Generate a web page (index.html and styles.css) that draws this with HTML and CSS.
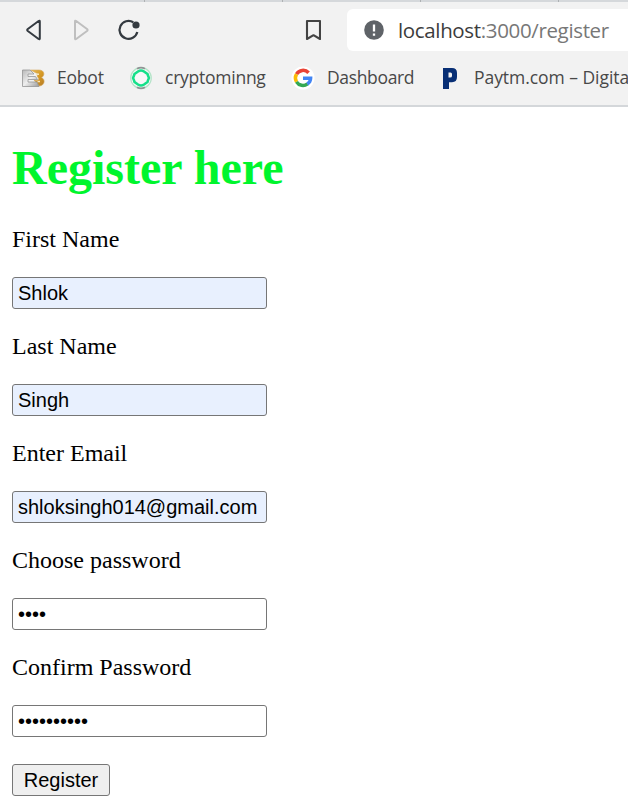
FILE: index.html
```html
<!DOCTYPE html>
<html lang="en">
<head>
<meta charset="utf-8">
<title>Register</title>
<link rel="stylesheet" href="styles.css">
</head>
<body>
<header class="browser">
  <div class="tabs"><i></i><i></i><i></i><i></i><i></i></div>
  <div class="toolbar">
    <svg class="nav" width="120" height="24" viewBox="0 0 120 24" fill="none" stroke-width="2" stroke-linejoin="round">
      <path d="M13.800 3.500v17q0 1.300-1.200.5L1.800 13q-1.200-1 0-2L12.600 3q1.200-.8 1.200.5z" stroke="#343a40"/>
      <path d="M49 3.500v17q0 1.300 1.200.5L61 13q1.200-1 0-2L50.200 3q-1.200-.8-1.200.5z" stroke="#bfbfbf"/>
      <path d="M107.300 4.200A9 9 0 1 0 111.300 14" stroke="#343a40" stroke-width="2.200"/>
      <circle cx="110" cy="7" r="3.600" fill="#343a40"/>
    </svg>
    <svg class="save" width="16" height="22" viewBox="0 0 16 22" fill="none" stroke="#434343" stroke-width="2.100"><path d="M2 2h13v18L8.500 16.200 2 20z" stroke-linejoin="round"/></svg>
    <div class="address">
      <svg width="20" height="20" viewBox="0 0 20 20"><circle cx="10" cy="10" r="9.800" fill="#5f6368"/><path d="M10 4.500v7M10 13.500v2.300" stroke="#fff" stroke-width="2.300"/></svg>
      <span class="url">localhost<span class="path">:3000/register</span></span>
    </div>
  </div>
  <nav class="bookmarks">
    <a class="bookmark eobot">
      <svg width="24" height="24" viewBox="0 0 24 24">
        <defs>
          <linearGradient id="silver" x2="1" y2="1"><stop stop-color="#b8b8b8"/><stop offset=".5" stop-color="#eee"/><stop offset="1" stop-color="#999"/></linearGradient>
          <linearGradient id="gold" x2="1" y2="1"><stop stop-color="#e8bd59"/><stop offset=".5" stop-color="#d79a25"/><stop offset="1" stop-color="#b67c27"/></linearGradient>
        </defs>
        <path d="M8.500 4H17c6 0 6 6 2.500 7.500C24 13.500 22.500 20 17 20l-5-6 3 .5 2-1.500-2-3 1-2z" fill="url(#gold)" stroke="#d5aa62" stroke-width=".6"/>
        <path d="M.5 4H8l4 4H6v2.500h7.500l2 3H6V16h9l2 4.500H.5z" fill="url(#silver)" stroke="#959595" stroke-width=".8"/>
        <path d="M14 8.200h3M15.500 15.500H18" stroke="#f4e4bd" stroke-width="1.500"/>
      </svg><span>Eobot</span></a>
    <a class="bookmark crypto">
      <svg width="24" height="24" viewBox="0 0 24 24" fill="none">
        <circle cx="11" cy="12" r="10.300" fill="#f8f8f8" stroke="#b5e3c8" stroke-width="1.200"/>
        <path d="M7 2.800Q11 .5 15 2.800M7 21.200Q11 23.500 15 21.200" stroke="#909494" stroke-width="1.800"/>
        <path d="M8 5.500Q11 3.500 14 5.500L17.500 8q.5 2 1.500 4-1 2-1.500 4L14 18.500q-3 2-6 0L4.500 16Q4 14 3 12q1-2 1.500-4z" stroke="#16e08a" stroke-width="2.600" stroke-linejoin="round"/>
      </svg><span>cryptominng</span></a>
    <a class="bookmark google">
      <svg width="24" height="24" viewBox="0 0 24 24" fill="none" stroke-width="3.500">
        <circle cx="11" cy="12" r="11.500" fill="#fff"/>
        <path d="M16.600 6.800A7.500 7.500 0 0 0 4.500 8.200" stroke="#ea4335"/>
        <path d="M4.500 8.200a7.500 7.500 0 0 0 0 7.600" stroke="#fbbc05"/>
        <path d="M4.500 15.800a7.500 7.500 0 0 0 11 2" stroke="#34a853"/>
        <path d="M11 12.200h7.600Q18.500 16 15.300 18" stroke="#4285f4"/>
      </svg><span>Dashboard</span></a>
    <a class="bookmark paytm">
      <svg width="24" height="24" viewBox="0 0 24 24"><path fill-rule="evenodd" d="M4 2H13q5 0 5 5v4q0 5.200-5 5.200h-3V23H4zM9.500 6.500v5H11q2 0 2-1.500V8q0-1.500-1.500-1.500z" fill="#082f75"/></svg><span>Paytm.com – Digital</span></a>
  </nav>
</header>
<main class="page">
  <h1>Register here</h1>
  <form>
    <label for="first">First Name</label>
    <input id="first" class="filled" type="text" value="Shlok">
    <label for="last">Last Name</label>
    <input id="last" class="filled" type="text" value="Singh">
    <label for="email">Enter Email</label>
    <input id="email" class="filled" type="email" value="shloksingh014@gmail.com">
    <label for="pass">Choose password</label>
    <input id="pass" type="password" value="abcd">
    <label for="confirm">Confirm Password</label>
    <input id="confirm" type="password" value="abcdefghij">
    <button type="button">Register</button>
  </form>
</main>
</body>
</html>
```
FILE: styles.css
```css
* { box-sizing: border-box; }
html, body { margin: 0; height: 805px; overflow: hidden; background: #fff; }
.browser { height: 107px; background: #f2f2f2; border-bottom: 2px solid #d4d7da; font-family: "Open Sans", sans-serif; overflow: hidden; }
.tabs { display: flex; height: 2px; margin-left: 7px; background: #d5d8db; box-shadow: -7px 0 #d5d8db; }
.tabs i { flex: 0 0 138px; border-right: 1px solid #aeb1b3; }
.toolbar { display: flex; align-items: center; height: 56px; padding-left: 26px; }
.nav { flex: none; margin-right: 159px; }
.save { flex: none; }
.address { display: flex; align-items: center; flex: 1; height: 42px; margin-left: 26px; padding-left: 17px; background: #fff; border-radius: 6px 0 0 6px; }
.address svg { flex: none; margin-right: 14px; }
.url { font-size: 20.500px; line-height: 28px; letter-spacing: -.35px; color: #3c3c3c; white-space: nowrap; }
.path { color: #777; }
.bookmarks { display: flex; align-items: center; height: 40px; padding-left: 22px; }
.bookmark { display: flex; align-items: center; flex: none; font-size: 17.500px; line-height: 24px; color: #484848; white-space: nowrap; }
.bookmark svg { flex: none; margin-right: 11px; overflow: visible; }
.bookmark span { padding-bottom: 2px; }
.eobot { width: 108px; letter-spacing: -.2px; }
.crypto { width: 162px; letter-spacing: -.25px; }
.google { width: 147px; letter-spacing: -.35px; }
.paytm { letter-spacing: -.05px; }
.page { padding: 33px 12px 0; font-family: "Liberation Serif", serif; }
h1 { margin: 0 0 31px; font-size: 48px; line-height: 55px; color: #00f52d; }
form { display: flex; flex-direction: column; align-items: flex-start; }
label { font-size: 24px; line-height: 27px; color: #000; }
input { width: 255px; height: 32px; margin: 24px 0; padding: 2px 5px; border: 1px solid #767676; border-radius: 3px; font: 20px "Liberation Sans", sans-serif; color: #000; background: #fff; }
.filled { background: #e8f0fe; }
button { width: 98px; height: 32px; margin-top: 3px; padding: 0; border: 1px solid #767676; border-radius: 3px; background: #efefef; font: 20px "Liberation Sans", sans-serif; color: #000; }
```
